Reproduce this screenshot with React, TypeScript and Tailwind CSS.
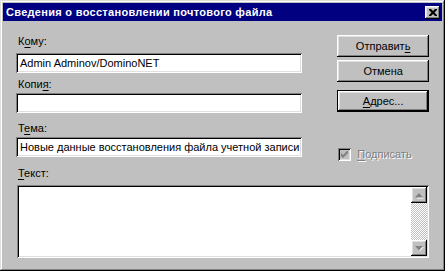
const sunken =
  "shadow-[inset_1px_1px_0_0_#808080,inset_-1px_-1px_0_0_#ffffff,inset_2px_2px_0_0_#000000,inset_-2px_-2px_0_0_#dfdfdf]";
const raised =
  "shadow-[inset_-1px_-1px_0_0_#000000,inset_1px_1px_0_0_#ffffff,inset_-2px_-2px_0_0_#808080,inset_2px_2px_0_0_#dfdfdf]";

function U({ children }: { children: string }) {
  return <span className="underline underline-offset-[2px] decoration-[1px]">{children}</span>;
}

function Arrow({ up }: { up: boolean }) {
  return (
    <svg width="16" height="16" viewBox="0 0 16 16">
      {up ? (
        <>
          <polygon points="4.5,10.5 11.5,10.5 8,6.5" fill="#ffffff" transform="translate(1,1)" />
          <polygon points="4,10.5 12,10.5 8,6" fill="#808080" />
        </>
      ) : (
        <>
          <polygon points="4.5,6 11.5,6 8,10" fill="#ffffff" transform="translate(1,1)" />
          <polygon points="4,6 12,6 8,10.5" fill="#808080" />
        </>
      )}
    </svg>
  );
}

export default function App() {
  return (
    <div className="w-[445px] h-[271px] bg-[#c0c0c0] font-['Liberation_Sans',Arial,sans-serif] text-[11px] leading-[13px] text-black">
      <div className="w-[445px] h-[271px] p-[3px] flex flex-col shadow-[inset_-1px_-1px_0_0_#000000,inset_1px_1px_0_0_#dfdfdf,inset_-2px_-2px_0_0_#808080,inset_2px_2px_0_0_#ffffff]">
        {/* title bar */}
        <div className="h-[18px] bg-[#000080] flex items-center pl-[3px] pr-[2px]">
          <span className="text-white font-bold text-[11px] tracking-[0.3px]">
            Сведения о восстановлении почтового файла
          </span>
          <div className={`ml-auto w-[15px] h-[13px] bg-[#c0c0c0] flex items-center justify-center ${raised}`}>
            <svg width="8" height="7" viewBox="0 0 8 7">
              <path d="M0,0 h2 l2,2 l2,-2 h2 v1 l-2.5,2.5 l2.5,2.5 v1 h-2 l-2,-2 l-2,2 h-2 v-1 l2.5,-2.5 l-2.5,-2.5 z" fill="#000" />
            </svg>
          </div>
        </div>

        {/* body */}
        <div className="flex-1 px-[13px] flex flex-col">
          <div className="flex">
            {/* left column */}
            <div className="w-[287px] flex flex-col">
              <div className="mt-[14px] h-[13px] pl-[2px]">
                К<U>о</U>му:
              </div>
              <div className={`mt-[5px] h-[20px] bg-white flex items-center pl-[4px] ${sunken}`}>
                Admin Adminov/DominoNET
              </div>
              <div className="mt-[5px] h-[13px] pl-[2px]">
                Копи<U>я</U>:
              </div>
              <div className={`mt-[2px] h-[20px] bg-white ${sunken}`} />
              <div className="mt-[9px] h-[13px] pl-[2px]">
                Т<U>е</U>ма:
              </div>
              <div className={`mt-[2px] h-[20px] bg-white flex items-center pl-[4px] ${sunken}`}>
                Новые данные восстановления файла учетной записи
              </div>
            </div>

            {/* right column */}
            <div className="ml-[35px] w-[92px] flex flex-col pt-[14px]">
              <div className={`h-[22px] flex items-center justify-center bg-[#c0c0c0] ${raised}`}>
                <span>
                  Отправит<U>ь</U>
                </span>
              </div>
              <div className={`mt-[3px] h-[22px] flex items-center justify-center bg-[#c0c0c0] ${raised}`}>
                Отмена
              </div>
              <div className="mt-[8px] h-[22px] border border-black">
                <div className={`h-full flex items-center justify-center bg-[#c0c0c0] ${raised}`}>
                  <span>
                    <U>А</U>дрес...
                  </span>
                </div>
              </div>
              <div className="mt-[36px] flex items-center ml-[1px]">
                <div className={`w-[13px] h-[13px] bg-[#c0c0c0] flex items-center justify-center ${sunken}`}>
                  <svg width="7" height="7" viewBox="0 0 7 7">
                    <path d="M0,2 L0,5 L2,7 L7,2 L7,-1 L2,4 Z" fill="#808080" />
                  </svg>
                </div>
                <span className="ml-[6px] text-[#808080] [text-shadow:1px_1px_0_#ffffff]">
                  <U>П</U>одписать
                </span>
              </div>
            </div>
          </div>

          {/* text area */}
          <div className="mt-[6px] h-[13px] pl-[2px]">
            <U>Т</U>екст:
          </div>
          <div className={`mt-[5px] ml-[1px] w-[412px] h-[73px] bg-white flex justify-end p-[2px] ${sunken}`}>
            <div className="w-[16px] flex flex-col">
              <div className={`h-[16px] bg-[#c0c0c0] ${raised}`}>
                <Arrow up />
              </div>
              <div className="flex-1 bg-[repeating-conic-gradient(#c0c0c0_0_25%,#ffffff_0_50%)] bg-[length:2px_2px]" />
              <div className={`h-[16px] bg-[#c0c0c0] ${raised}`}>
                <Arrow up={false} />
              </div>
            </div>
          </div>
        </div>
      </div>
    </div>
  );
}
